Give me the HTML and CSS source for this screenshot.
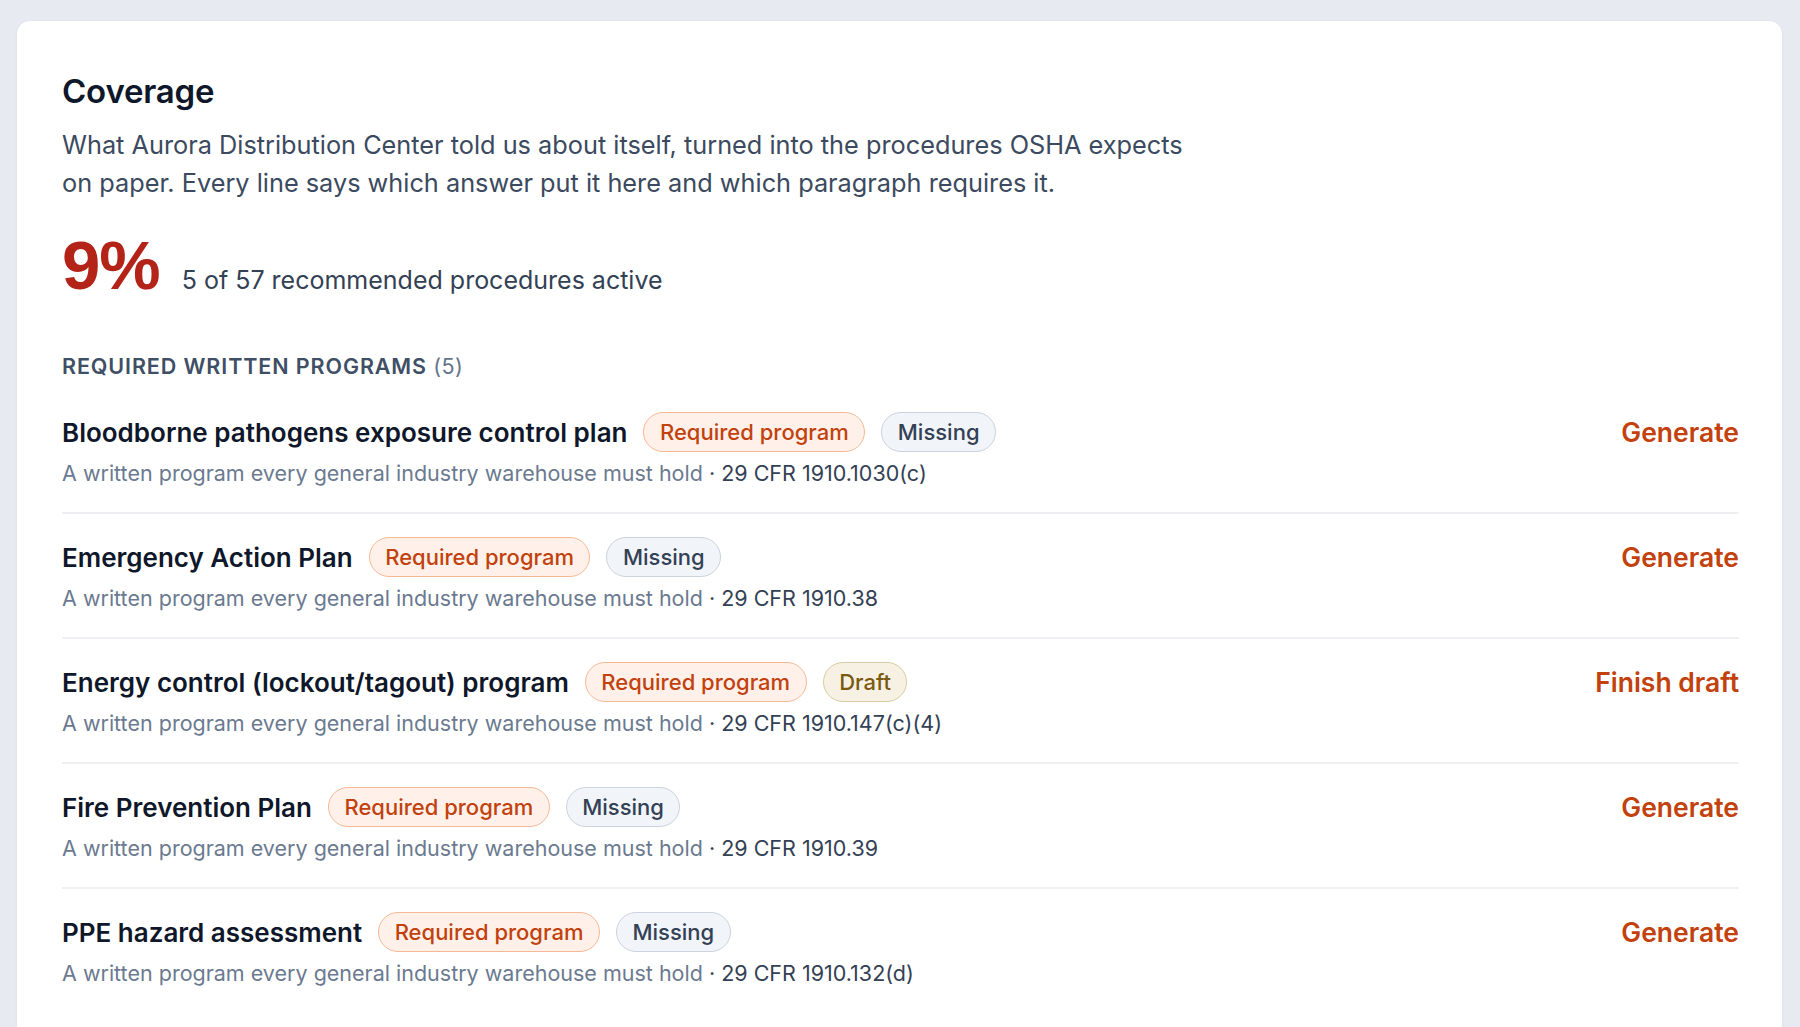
FILE: index.html
```html
<!DOCTYPE html>
<html lang="en">
<head>
<meta charset="utf-8">
<title>Coverage</title>
<link rel="stylesheet" href="styles.css">
</head>
<body>
<main class="page">
  <section class="card">
    <h1 class="card-title">Coverage</h1>
    <p class="card-lede">What Aurora Distribution Center told us about itself, turned into the procedures OSHA expects on paper. Every line says which answer put it here and which paragraph requires it.</p>

    <div class="score">
      <span class="score-value">9%</span>
      <span class="score-label">5 of 57 recommended procedures active</span>
    </div>

    <h2 class="group-title">Required written programs <span class="group-count">(5)</span></h2>

    <ul class="programs">
      <li class="program">
        <div class="program-main">
          <div class="program-head">
            <span class="program-name">Bloodborne pathogens exposure control plan</span>
            <span class="pill pill-required">Required program</span>
            <span class="pill pill-missing">Missing</span>
          </div>
          <p class="program-meta">A written program every general industry warehouse must hold <span class="cite">· 29 CFR 1910.1030(c)</span></p>
        </div>
        <a class="program-action" href="#">Generate</a>
      </li>
      <li class="program">
        <div class="program-main">
          <div class="program-head">
            <span class="program-name">Emergency Action Plan</span>
            <span class="pill pill-required">Required program</span>
            <span class="pill pill-missing">Missing</span>
          </div>
          <p class="program-meta">A written program every general industry warehouse must hold <span class="cite">· 29 CFR 1910.38</span></p>
        </div>
        <a class="program-action" href="#">Generate</a>
      </li>
      <li class="program">
        <div class="program-main">
          <div class="program-head">
            <span class="program-name">Energy control (lockout/tagout) program</span>
            <span class="pill pill-required">Required program</span>
            <span class="pill pill-draft">Draft</span>
          </div>
          <p class="program-meta">A written program every general industry warehouse must hold <span class="cite">· 29 CFR 1910.147(c)(4)</span></p>
        </div>
        <a class="program-action" href="#">Finish draft</a>
      </li>
      <li class="program">
        <div class="program-main">
          <div class="program-head">
            <span class="program-name">Fire Prevention Plan</span>
            <span class="pill pill-required">Required program</span>
            <span class="pill pill-missing">Missing</span>
          </div>
          <p class="program-meta">A written program every general industry warehouse must hold <span class="cite">· 29 CFR 1910.39</span></p>
        </div>
        <a class="program-action" href="#">Generate</a>
      </li>
      <li class="program">
        <div class="program-main">
          <div class="program-head">
            <span class="program-name">PPE hazard assessment</span>
            <span class="pill pill-required">Required program</span>
            <span class="pill pill-missing">Missing</span>
          </div>
          <p class="program-meta">A written program every general industry warehouse must hold <span class="cite">· 29 CFR 1910.132(d)</span></p>
        </div>
        <a class="program-action" href="#">Generate</a>
      </li>
    </ul>
  </section>
</main>
</body>
</html>
```

FILE: styles.css
```css
* {
  box-sizing: border-box;
}

html, body {
  margin: 0;
  padding: 0;
  background: #e7eaf0;
}

body {
  font-family: Inter, "Noto Sans", "Liberation Sans", sans-serif;
  color: #0f172a;
  -webkit-font-smoothing: antialiased;
}

.page {
  padding: 20px 17px 0 16px;
}

.card {
  background: #ffffff;
  border: 1px solid #e2e6ec;
  border-radius: 14px;
  box-shadow: 0 1px 2px rgba(15, 23, 42, 0.04);
  padding: 50px 43px 60px 45px;
}

.card-title {
  margin: 0;
  font-size: 33px;
  line-height: 40px;
  font-weight: 600;
  color: #0f172a;
  letter-spacing: -0.2px;
}

.card-lede {
  margin: 15px 0 0 0;
  max-width: 1135px;
  font-size: 25.3px;
  line-height: 38px;
  color: #3b4a5e;
}

.score {
  display: flex;
  align-items: baseline;
  gap: 22px;
  margin-top: 28px;
}

/* the big percentage uses a narrower grotesque so the % sits tight */
.score-value {
  font-family: "Liberation Sans", Arial, sans-serif;
  font-size: 69px;
  line-height: 72px;
  font-weight: 700;
  color: #b42318;
  letter-spacing: -1px;
}

.score-label {
  font-size: 25px;
  color: #334155;
}

.group-title {
  margin: 50px 0 0 0;
  font-size: 21.5px;
  line-height: 28px;
  font-weight: 600;
  text-transform: uppercase;
  letter-spacing: 0.9px;
  color: #3f4f66;
}

.group-count {
  font-weight: 400;
  letter-spacing: 0.4px;
  color: #64748b;
}

.programs {
  list-style: none;
  margin: 9px 0 0 0;
  padding: 0;
}

.program {
  display: flex;
  align-items: flex-start;
  justify-content: space-between;
  padding: 23px 0 24px 0;
  border-bottom: 2px solid #eef0f3;
}

.program:last-child {
  border-bottom: none;
}

.program-main {
  display: flex;
  flex-direction: column;
  gap: 6px;
}

.program-head {
  display: flex;
  align-items: center;
  gap: 16px;
  height: 40px;
}

.program-name {
  font-size: 26px;
  font-weight: 600;
  color: #0f172a;
}

.pill {
  display: inline-flex;
  align-items: center;
  height: 40px;
  padding: 0 15.5px;
  border-radius: 20px;
  border: 1.5px solid;
  font-size: 22px;
  font-weight: 500;
}

.pill-required {
  background: #fff1ea;
  border-color: #f6b995;
  color: #c2410c;
}

.pill-missing {
  background: #f1f4f8;
  border-color: #cbd3de;
  color: #334155;
}

.pill-draft {
  background: #f6f1e3;
  border-color: #d8cba3;
  color: #7a5a10;
}

.program-meta {
  margin: 0;
  font-size: 21.5px;
  line-height: 30px;
  color: #6b7a90;
}

.cite {
  color: #334155;
}

.program-action {
  font-size: 26.5px;
  line-height: 40px;
  font-weight: 600;
  color: #c2410c;
  text-decoration: none;
  white-space: nowrap;
}
```
